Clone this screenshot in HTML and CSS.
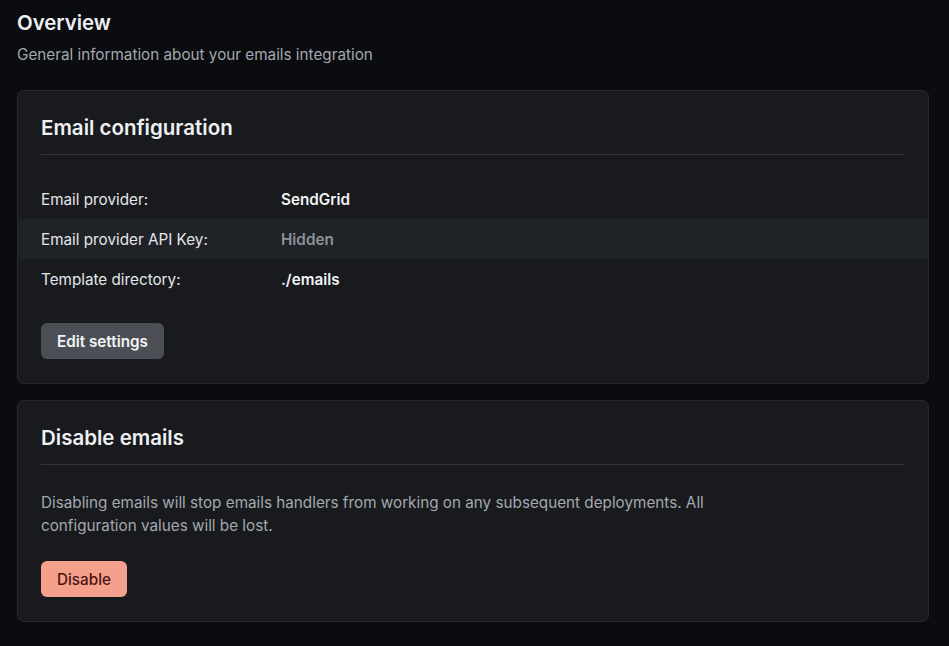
FILE: index.html
```html
<!DOCTYPE html>
<html>
<head>
  <meta charset="UTF-8">
  <title>Emails overview</title>
  <link rel="stylesheet" href="styles.css">
</head>
<body>

<div class="page">
  <h1>Overview</h1>
  <p class="subtitle">General information about your emails integration</p>

  <!-- Email configuration -->
  <div class="card">
    <h2>Email configuration</h2>
    <div class="rows">
      <div class="row">
        <span class="label">Email provider:</span>
        <span class="value">SendGrid</span>
      </div>
      <div class="row striped">
        <span class="label">Email provider API Key:</span>
        <span class="value muted">Hidden</span>
      </div>
      <div class="row">
        <span class="label">Template directory:</span>
        <span class="value">./emails</span>
      </div>
    </div>
    <button class="btn btn-grey">Edit settings</button>
  </div>

  <!-- Disable emails -->
  <div class="card">
    <h2>Disable emails</h2>
    <p class="desc">Disabling emails will stop emails handlers from working on any subsequent deployments. All configuration values will be lost.</p>
    <button class="btn btn-danger">Disable</button>
  </div>
</div>

</body>
</html>
```

FILE: styles.css
```css
body {
  margin: 0;
  background: #0a0c0f;
  color: #e6e8eb;
  font-family: Inter, "Noto Sans", sans-serif;
}

.page {
  padding: 10px 20px 24px 17px;
}

h1 {
  margin: 0;
  font-size: 20.4px;
  font-weight: 600;
  line-height: 26px;
  color: #eef0f2;
}

.subtitle {
  margin: 7px 0 0;
  font-size: 15.25px;
  line-height: 24px;
  color: #a3a8af;
}

.card {
  margin-top: 23px;
  background: #181a1e;
  border: 1px solid #26292e;
  border-radius: 7px;
  padding: 24px 24px 24px 23px;
}

.card + .card {
  margin-top: 16px;
}

.card h2 {
  margin: 0;
  padding-bottom: 13px;
  border-bottom: 1px solid #33363b;
  font-size: 20.5px;
  font-weight: 600;
  line-height: 26px;
  color: #eef0f2;
}

.rows {
  margin: 24px -24px 24px -23px;
}

.row {
  display: flex;
  align-items: center;
  height: 40px;
  padding: 0 24px 0 23px;
  font-size: 15.25px;
}

.row.striped {
  background: #1f2226;
}

.label {
  width: 240px;
  color: #e4e6e9;
}

.value {
  font-weight: 600;
  color: #f2f3f5;
}

.value.muted {
  color: #8d9298;
}

.btn {
  height: 36px;
  border: none;
  border-radius: 6px;
  padding: 0 16px;
  font-family: inherit;
  font-size: 15.25px;
  cursor: pointer;
}

.btn-grey {
  background: #4b4f55;
  color: #f3f4f6;
  font-weight: 600;
}

.btn-danger {
  background: #f4a08c;
  color: #4a1210;
  font-weight: 500;
}

.desc {
  max-width: 690px;
  margin: 26px 0 24px;
  font-size: 15.25px;
  line-height: 23px;
  color: #a3a8af;
}
```
